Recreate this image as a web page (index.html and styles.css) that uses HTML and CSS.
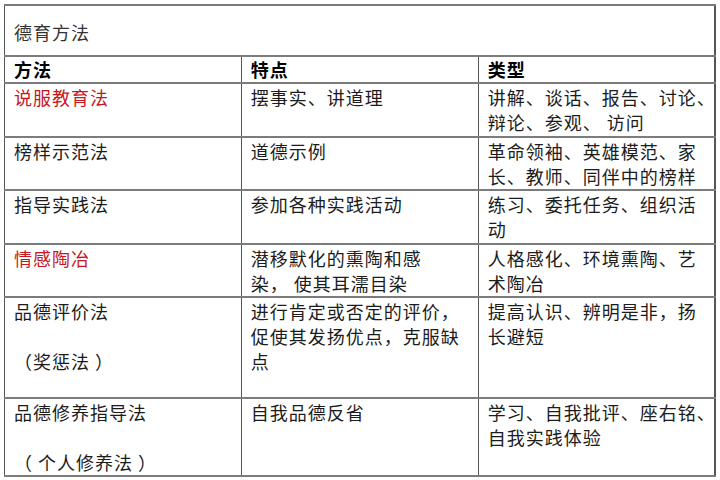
FILE: index.html
```html
<!DOCTYPE html>
<html lang="zh-CN">
<head>
<meta charset="utf-8">
<link rel="stylesheet" href="styles.css">
</head>
<body>
<table class="grid">
  <colgroup><col class="c"><col class="c"><col class="c"></colgroup>
  <tr class="r-title"><td colspan="3" class="title">德育方法</td></tr>
  <tr class="r-head"><th>方法</th><th>特点</th><th>类型</th></tr>
  <tr class="r1">
    <td class="red">说服教育法</td>
    <td>摆事实、讲道理</td>
    <td>讲解、谈话、报告、讨论、<br>辩论、参观、 访问</td>
  </tr>
  <tr class="r2">
    <td>榜样示范法</td>
    <td>道德示例</td>
    <td>革命领袖、英雄模范、家<br>长、教师、同伴中的榜样</td>
  </tr>
  <tr class="r3">
    <td>指导实践法</td>
    <td>参加各种实践活动</td>
    <td>练习、委托任务、组织活<br>动</td>
  </tr>
  <tr class="r4">
    <td class="red">情感陶冶</td>
    <td>潜移默化的熏陶和感<br>染， 使其耳濡目染</td>
    <td>人格感化、环境熏陶、艺<br>术陶冶</td>
  </tr>
  <tr class="r5">
    <td>品德评价法<br><br>（奖惩法 ）</td>
    <td>进行肯定或否定的评价，<br>促使其发扬优点，克服缺<br>点</td>
    <td>提高认识、辨明是非，扬<br>长避短</td>
  </tr>
  <tr class="r6">
    <td>品德修养指导法<br><br>（ 个人修养法 ）</td>
    <td>自我品德反省</td>
    <td>学习、自我批评、座右铭、<br>自我实践体验</td>
  </tr>
</table>
</body>
</html>
```
FILE: styles.css
```css
html, body {
  margin: 0;
  padding: 0;
  background: #ffffff;
}
body {
  padding: 4px;
  font-family: "Noto Sans CJK SC", "Noto Sans", sans-serif;
  font-size: 18px;
  color: #1c1c1c;
}
.grid {
  border-collapse: collapse;
  table-layout: fixed;
  width: 712px;
  border-right: 2px solid #555555;
  border-left: 1px solid #555555;
}
.c { width: 33.33%; }
.grid td, .grid th {
  border-left: 1px solid #555555;
  border-right: 1px solid #555555;
  border-top: 2px solid #7c7c7c;
  border-bottom: 2px solid #7c7c7c;
  padding: 1px 0 0 9px;
  vertical-align: top;
  text-align: left;
  line-height: 25px;
  letter-spacing: 1px;
  white-space: nowrap;
}
.grid .title {
  padding-top: 14px;
  color: #333333;
}
.grid th {
  font-weight: bold;
  color: #000000;
  padding-top: 0;
}
.red { color: #c8161d; }
.r-title { height: 51px; }
.r-head { height: 26px; }
.r1 { height: 54px; }
.r2 { height: 51px; }
.r3 { height: 54px; }
.r4 { height: 52px; }
.r5 { height: 101px; }
.r6 { height: 74px; }
```
